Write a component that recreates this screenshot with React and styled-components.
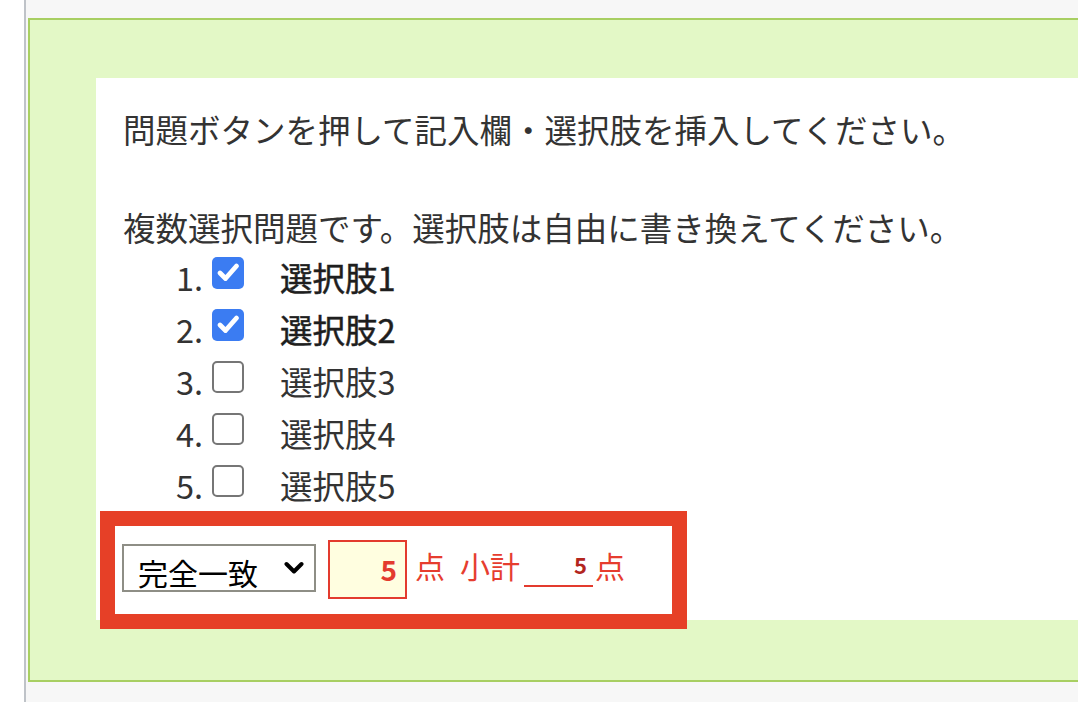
import React from 'react';
import styled, { createGlobalStyle } from 'styled-components';

const choices = [
  { label: '選択肢1', checked: true },
  { label: '選択肢2', checked: true },
  { label: '選択肢3', checked: false },
  { label: '選択肢4', checked: false },
  { label: '選択肢5', checked: false },
];

const App = () => {
  return (
    <>
      <GlobalStyle />
      <Page>
        <Gutter />
        <Divider />
        <Workspace>
          <Panel>
            <Sheet>
              <Intro>問題ボタンを押して記入欄・選択肢を挿入してください。</Intro>
              <Question>複数選択問題です。選択肢は自由に書き換えてください。</Question>
              <ChoiceList>
                {choices.map((c, i) => (
                  <Choice key={c.label}>
                    <Number>{i + 1}.</Number>
                    <CheckBox $checked={c.checked}>
                      {c.checked && (
                        <svg width='32' height='32' viewBox='0 0 32 32'>
                          <polyline
                            points='8,16 13.5,21.5 24.5,9'
                            fill='none'
                            stroke='#fff'
                            strokeWidth='4.8'
                            strokeLinecap='round'
                            strokeLinejoin='round'
                          />
                        </svg>
                      )}
                    </CheckBox>
                    <ChoiceLabel $checked={c.checked}>{c.label}</ChoiceLabel>
                  </Choice>
                ))}
              </ChoiceList>
              <ScoreBox>
                <SelectWrap>
                  <MatchSelect defaultValue='exact'>
                    <option value='exact'>完全一致</option>
                    <option value='partial'>部分一致</option>
                  </MatchSelect>
                  <Chevron width='20' height='14' viewBox='0 0 20 14'>
                    <polyline
                      points='2.5,3 10,10.5 17.5,3'
                      fill='none'
                      stroke='#000'
                      strokeWidth='4'
                      strokeLinecap='round'
                      strokeLinejoin='round'
                    />
                  </Chevron>
                </SelectWrap>
                <PointInput type='text' defaultValue='5' />
                <Unit>点</Unit>
                <Caption>小計</Caption>
                <Subtotal>5</Subtotal>
                <Unit $tight>点</Unit>
              </ScoreBox>
            </Sheet>
          </Panel>
        </Workspace>
      </Page>
    </>
  );
};

export default App;

const GlobalStyle = createGlobalStyle`
  html, body {
    margin: 0;
    padding: 0;
    background: #fff;
    overflow: hidden;
  }
  body {
    font-family: "Noto Sans CJK JP", "Noto Sans", sans-serif;
  }
`;

const Page = styled.div`
  display: flex;
  width: 1078px;
  height: 702px;
  overflow: hidden;
`;

const Gutter = styled.div`
  width: 24px;
  flex-shrink: 0;
  background: #fff;
`;

const Divider = styled.div`
  width: 2px;
  flex-shrink: 0;
  background: #bfc3c8;
`;

const Workspace = styled.div`
  flex: 1;
  min-width: 0;
  background: #f7f7f7;
  padding: 18px 0 0 2px;
`;

const Panel = styled.div`
  box-sizing: border-box;
  width: 1200px;
  height: 664px;
  border: 2px solid #a8cf62;
  border-right: none;
  background: #e3f8c6;
  padding: 58px 0 0 66px;
`;

const Sheet = styled.div`
  box-sizing: border-box;
  height: 542px;
  background: #fff;
  padding: 26px 0 0 27px;
  color: #333;
  font-size: 32.5px;
  line-height: 49px;
`;

const Intro = styled.p`
  margin: 0 0 49px;
  white-space: nowrap;
`;

const Question = styled.p`
  margin: 0;
  white-space: nowrap;
`;

const ChoiceList = styled.div`
  display: flex;
  flex-direction: column;
`;

const Choice = styled.div`
  display: flex;
  align-items: center;
  height: 52px;
  line-height: 52px;
`;

const Number = styled.span`
  width: 80px;
  flex-shrink: 0;
  text-align: right;
`;

const CheckBox = styled.span`
  box-sizing: border-box;
  width: 32px;
  height: 32px;
  margin: 0 0 8px 9px;
  border-radius: 5px;
  display: flex;
  align-items: center;
  justify-content: center;
  background: ${p => (p.$checked ? '#3b7cf2' : '#fff')};
  border: ${p => (p.$checked ? 'none' : '2px solid #767676')};
  svg {
    display: block;
  }
`;

const ChoiceLabel = styled.span`
  margin-left: 36px;
  color: ${p => (p.$checked ? '#1e1e1e' : '#333')};
  -webkit-text-stroke: ${p => (p.$checked ? '0.5px #1e1e1e' : '0')};
`;

const ScoreBox = styled.div`
  box-sizing: border-box;
  width: 587px;
  height: 118px;
  margin: 0 0 -7px -23px;
  border: 15px solid #e64027;
  background: #fff;
  display: flex;
  align-items: center;
  padding: 0 0 4px 7px;
`;

const SelectWrap = styled.div`
  position: relative;
  display: flex;
`;

const MatchSelect = styled.select`
  appearance: none;
  box-sizing: border-box;
  width: 194px;
  height: 48px;
  border: 2px solid #8e8e86;
  border-radius: 0;
  background: #fff;
  color: #000;
  font-family: "Noto Sans CJK JP", sans-serif;
  font-size: 30px;
  line-height: 44px;
  padding: 4px 0 0 14px;
  outline: none;
`;

const Chevron = styled.svg`
  position: absolute;
  right: 12px;
  top: 17px;
  pointer-events: none;
`;

const PointInput = styled.input`
  box-sizing: border-box;
  width: 79px;
  height: 59px;
  margin: 0 0 -2px 12px;
  border: 2px solid #e33b2e;
  background: #fffee0;
  color: #e33b2e;
  font-family: "Noto Sans CJK JP", sans-serif;
  font-weight: 700;
  font-size: 28px;
  text-align: right;
  padding: 0 8px 0 0;
  outline: none;
`;

const Unit = styled.span`
  margin-left: ${p => (p.$tight ? '2px' : '8px')};
  margin-bottom: 6px;
  color: #e63d2f;
  font-size: 30px;
  line-height: 40px;
`;

const Caption = styled.span`
  margin: 0 0 6px 15px;
  color: #e63d2f;
  font-size: 30px;
  line-height: 40px;
`;

const Subtotal = styled.span`
  box-sizing: border-box;
  width: 69px;
  height: 40px;
  margin: 0 0 2px 4px;
  border-bottom: 2px solid #e33b2e;
  text-align: right;
  padding-right: 6px;
  color: #b3261e;
  font-weight: 700;
  font-size: 22px;
  line-height: 34px;
`;
